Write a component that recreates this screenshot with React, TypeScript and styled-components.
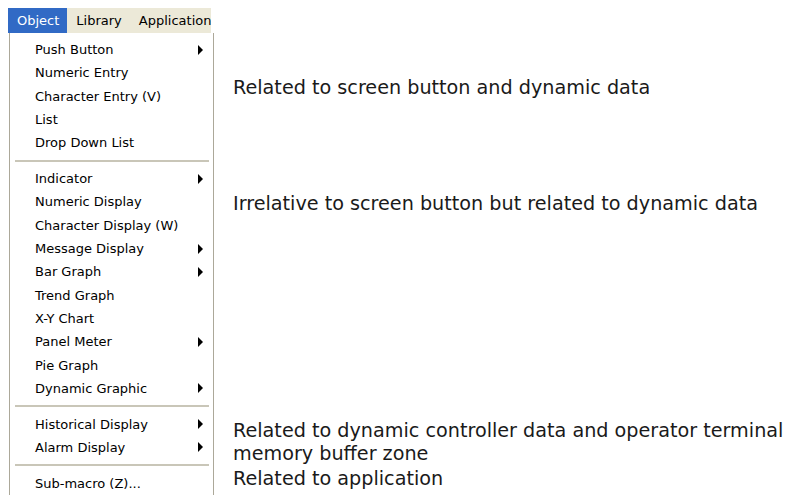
import React from "react";
import styled, { createGlobalStyle } from "styled-components";

const GlobalStyle = createGlobalStyle`
  html, body {
    margin: 0;
    padding: 0;
    background: #ffffff;
  }
`;

type Item = { label: string; sub?: boolean };

const sections: { items: Item[]; note: React.ReactNode; noteTop: number; divided?: boolean }[] = [
  {
    items: [
      { label: "Push Button", sub: true },
      { label: "Numeric Entry" },
      { label: "Character Entry (V)" },
      { label: "List" },
      { label: "Drop Down List" },
    ],
    note: "Related to screen button and dynamic data",
    noteTop: 43,
  },
  {
    divided: true,
    items: [
      { label: "Indicator", sub: true },
      { label: "Numeric Display" },
      { label: "Character Display (W)" },
      { label: "Message Display", sub: true },
      { label: "Bar Graph", sub: true },
      { label: "Trend Graph" },
      { label: "X-Y Chart" },
      { label: "Panel Meter", sub: true },
      { label: "Pie Graph" },
      { label: "Dynamic Graphic", sub: true },
    ],
    note: "Irrelative to screen button but related to dynamic data",
    noteTop: 38,
  },
  {
    divided: true,
    items: [
      { label: "Historical Display", sub: true },
      { label: "Alarm Display", sub: true },
    ],
    note: (
      <>
        Related to dynamic controller data and operator terminal
        <br />
        memory buffer zone
      </>
    ),
    noteTop: 19,
  },
  {
    divided: true,
    items: [{ label: "Sub-macro (Z)..." }],
    note: "Related to application",
    noteTop: 8,
  },
];

export default function App() {
  return (
    <Page>
      <GlobalStyle />
      <MenuBar>
        <MenuTitle $active>Object</MenuTitle>
        <MenuTitle>Library</MenuTitle>
        <MenuTitle>Application</MenuTitle>
      </MenuBar>
      {sections.map((s, i) => (
        <Section key={i}>
          <MenuGroup $first={i === 0}>
            {s.divided && <Separator />}
            {s.items.map((it) => (
              <Row key={it.label}>
                <span>{it.label}</span>
                {it.sub && <Arrow />}
              </Row>
            ))}
          </MenuGroup>
          <Note $top={s.noteTop}>{s.note}</Note>
        </Section>
      ))}
    </Page>
  );
}

const Page = styled.div`
  padding: 8px 0 0 8px;
  width: 781px;
  height: 487px;
  overflow: hidden;
  font-family: "DejaVu Sans", Verdana, sans-serif;
`;

const MenuBar = styled.div`
  display: flex;
  width: 203px;
  height: 25px;
  overflow: hidden;
  background: #ece9d8;
`;

const MenuTitle = styled.div<{ $active?: boolean }>`
  display: flex;
  align-items: center;
  padding: 0 8px 0 9px;
  font-size: 13px;
  white-space: nowrap;
  color: ${(p) => (p.$active ? "#ffffff" : "#000000")};
  background: ${(p) => (p.$active ? "#316ac5" : "transparent")};
`;

const Section = styled.div`
  display: flex;
`;

const MenuGroup = styled.div<{ $first?: boolean }>`
  display: flex;
  flex-direction: column;
  flex: none;
  width: 203px;
  margin-left: 1px;
  padding-top: ${(p) => (p.$first ? "5px" : "0")};
  border-left: 1px solid #aca899;
  border-right: 1px solid #aca899;
  background: #ffffff;
`;

const Separator = styled.div`
  height: 12.5px;
  display: flex;
  align-items: center;
  padding: 0 4px 0 5px;

  &::before {
    content: "";
    flex: 1;
    height: 2px;
    background: #c9c6b8;
  }
`;

const Row = styled.div`
  display: flex;
  align-items: center;
  justify-content: space-between;
  height: 23.3px;
  padding: 0 10px 0 25px;
  font-size: 13px;
  color: #000000;
  white-space: nowrap;
`;

const Arrow = styled.span`
  width: 0;
  height: 0;
  border-top: 5px solid transparent;
  border-bottom: 5px solid transparent;
  border-left: 5px solid #000000;
`;

const Note = styled.div<{ $top: number }>`
  align-self: flex-start;
  height: 0;
  padding: ${(p) => p.$top}px 0 0 19px;
  font-size: 19.2px;
  line-height: 23px;
  color: #1a1a1a;
  white-space: nowrap;
`;
